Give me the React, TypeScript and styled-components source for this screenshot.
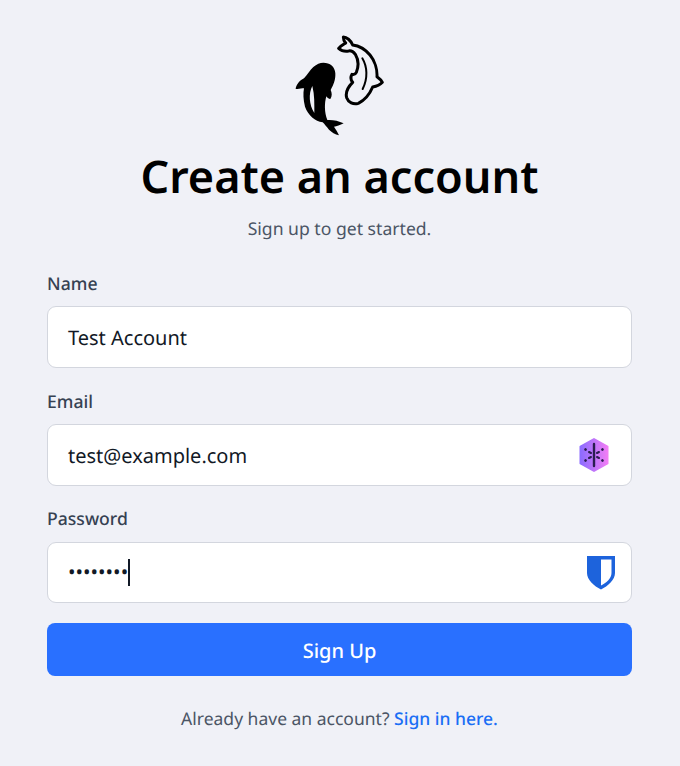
import React from "react";
import styled, { createGlobalStyle } from "styled-components";

const Global = createGlobalStyle`
  html, body { margin: 0; padding: 0; background: #f0f1f7; }
  body { font-family: "Noto Sans", sans-serif; text-rendering: geometricPrecision; }
`;

const Page = styled.main`
  width: 680px;
  height: 766px;
  box-sizing: border-box;
  padding: 25px 48px 0 47px;
  overflow: hidden;
`;

const Header = styled.header`
  display: flex;
  flex-direction: column;
  align-items: center;
`;

const Logo = styled.svg`
  display: block;
  width: 120px;
  height: 120px;
  filter: blur(0.45px);
`;

const Title = styled.h1`
  margin: 1px 0 0;
  font-size: 45px;
  line-height: 62px;
  font-weight: 600;
  color: #000;
`;

const Subtitle = styled.p`
  margin: 9px 0 0;
  font-size: 17.6px;
  line-height: 24px;
  color: #4b5565;
`;

const Form = styled.form`
  display: flex;
  flex-direction: column;
  gap: 20.6px;
  margin-top: 30px;
`;

const Field = styled.div`
  display: flex;
  flex-direction: column;
  gap: 9px;
`;

const Label = styled.label`
  font-size: 17.6px;
  line-height: 26.4px;
  font-weight: 500;
  color: #364152;
`;

const InputBox = styled.div`
  box-sizing: border-box;
  height: 61.6px;
  display: flex;
  align-items: center;
  justify-content: space-between;
  padding: 0 15px 0 20px;
  background: #fff;
  border: 1px solid #d3d6de;
  border-radius: 9px;
`;

const Value = styled.span`
  padding-top: 2px;
  font-size: 20px;
  line-height: 28px;
  color: #121926;
`;

const Dots = styled.span`
  display: flex;
  align-items: center;
  font-size: 20px;
  line-height: 28px;
  color: #121926;
`;

const Caret = styled.span`
  width: 2px;
  height: 27px;
  background: #121926;
`;

const Submit = styled.button`
  height: 52.4px;
  margin-top: -0.6px;
  padding: 2px 0 0;
  border: 0;
  border-radius: 8px;
  background: #2970ff;
  color: #fff;
  font-family: inherit;
  font-size: 20px;
  font-weight: 500;
  text-rendering: geometricPrecision;
`;

const Footer = styled.p`
  margin: 30px 0 0;
  text-align: center;
  font-size: 17.5px;
  line-height: 26px;
  color: #4b5565;
`;

const SignIn = styled.a`
  color: #1a6ef5;
  font-weight: 500;
  text-decoration: none;
`;

const HexSvg = styled.svg`
  display: block;
  margin-right: 6px;
`;

const KoiLogo = () => (
  <Logo viewBox="0 0 360 360" aria-hidden="true">
    <path
      fill="#000"
      d="M130 113C150 113 165 125 166 145C167 165 160 180 152 195C156 205 157 212 151 222C146 222 141 218 139 214C133 235 133 262 142 285C158 284 175 287 191 295C180 301 170 304 162 305C168 314 173 322 177 331C165 328 155 322 147 314C140 306 134 298 128 292C105 288 85 272 75 245C70 225 69 205 72 190C65 188 55 192 47 192C48 180 58 167 72 160C82 150 90 135 100 126C110 117 120 113 130 113Z"
    />
    <path fill="#f0f1f7" d="M97 183C85 205 87 240 103 264C103 238 104 210 97 183Z" />
    <path
      fill="none"
      stroke="#000"
      strokeWidth="9"
      strokeLinejoin="round"
      strokeLinecap="round"
      d="M190 36C200 36 212 46 218 60C236 62 255 72 270 90C285 108 292 135 291 155C298 160 304 166 307 172C300 180 290 184 278 186C270 205 255 225 235 235C220 240 205 232 200 218C195 200 205 185 218 172C212 165 212 155 216 148C222 150 226 148 229 142C236 125 236 105 226 88C220 80 214 76 206 78C195 80 185 78 176 70C182 62 192 58 197 54C192 48 190 42 190 36Z"
    />
    <path
      fill="none"
      stroke="#000"
      strokeWidth="6"
      strokeLinecap="round"
      d="M247 100C262 125 264 160 248 192"
    />
  </Logo>
);

const HexIcon = () => (
  <HexSvg width="32" height="36" viewBox="0 0 32 36" aria-hidden="true">
    <defs>
      <linearGradient id="hex" x1="0" x2="1" y1="0" y2="0">
        <stop offset="0" stopColor="#8d6cff" />
        <stop offset="1" stopColor="#f07df5" />
      </linearGradient>
    </defs>
    <path
      fill="url(#hex)"
      stroke="url(#hex)"
      strokeWidth="2"
      strokeLinejoin="round"
      d="M16 2L29.5 9.5V26.5L16 34L2.5 26.5V9.5Z"
    />
    <g stroke="#2a1c50" strokeLinecap="round" fill="none">
      <path strokeWidth="2.4" d="M16 7V29" />
      <path strokeWidth="2" d="M13 16L11 15M19 16L21 15M13 20L11 21M19 20L21 21" />
      <path strokeWidth="2.6" d="M7.5 12.5L7.6 12.6M24.5 12.5L24.4 12.6M7.5 23.5L7.6 23.4M24.5 23.5L24.4 23.4" />
    </g>
  </HexSvg>
);

const ShieldIcon = () => (
  <svg width="30" height="35" viewBox="0 0 30 35" aria-hidden="true">
    <path
      fill="#1d63dc"
      fillRule="evenodd"
      d="M1 1H29V18C29 25 22 31 15 34.5C8 31 1 25 1 18ZM15 4.5V30.5C20 28 25.5 23.5 25.5 18V4.5Z"
    />
  </svg>
);

export default function App() {
  return (
    <>
      <Global />
      <Page>
        <Header>
          <KoiLogo />
          <Title>Create an account</Title>
          <Subtitle>Sign up to get started.</Subtitle>
        </Header>
        <Form>
          <Field>
            <Label>Name</Label>
            <InputBox>
              <Value>Test Account</Value>
            </InputBox>
          </Field>
          <Field>
            <Label>Email</Label>
            <InputBox>
              <Value>test@example.com</Value>
              <HexIcon />
            </InputBox>
          </Field>
          <Field>
            <Label>Password</Label>
            <InputBox>
              <Dots>
                ••••••••
                <Caret />
              </Dots>
              <ShieldIcon />
            </InputBox>
          </Field>
          <Submit type="button">Sign Up</Submit>
        </Form>
        <Footer>
          Already have an account? <SignIn href="#">Sign in here.</SignIn>
        </Footer>
      </Page>
    </>
  );
}
